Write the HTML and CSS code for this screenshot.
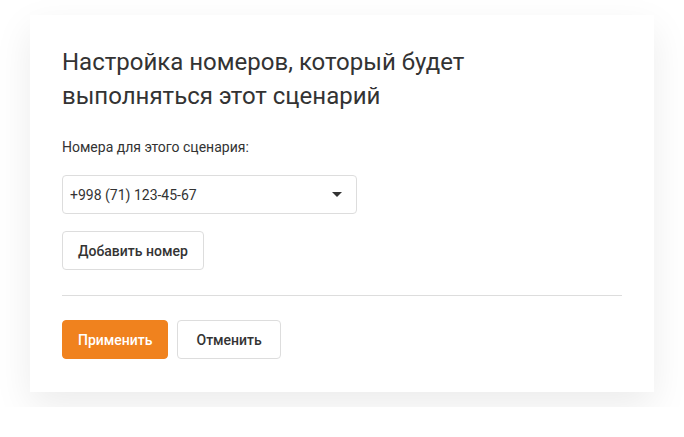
FILE: index.html
```html
<!DOCTYPE html>
<html lang="ru">
<head>
    <meta charset="UTF-8">
    <meta name="viewport" content="width=device-width, initial-scale=1.0">
    <title>Настройка номеров</title>
    <link rel="stylesheet" href="styles.css">
</head>
<body>
    <div class="card">
        <h2>Настройка номеров, который будет выполняться этот сценарий</h2>

        <label class="field-label">Номера для этого сценария:</label>

        <div class="select">
            <span>+998 (71) 123-45-67</span>
            <span class="caret"></span>
        </div>

        <button class="btn add-btn">Добавить номер</button>

        <hr class="divider">

        <div class="actions">
            <button class="btn apply-btn">Применить</button>
            <button class="btn cancel-btn">Отменить</button>
        </div>
    </div>
</body>
</html>
```

FILE: styles.css
```css
* {
    margin: 0;
    padding: 0;
    box-sizing: border-box;
}

body {
    font-family: Roboto, "Liberation Sans", sans-serif;
    background-color: #fff;
    color: #333;
    padding: 15px 30px;
}

.card {
    width: 624px;
    background: white;
    padding: 30px 32px 33px;
    box-shadow: 0 14px 36px rgba(0, 0, 0, 0.08);
}

h2 {
    font-size: 24px;
    line-height: 34px;
    font-weight: 400;
    color: #333;
    max-width: 460px;
}

.field-label {
    display: block;
    margin-top: 25px;
    font-size: 14px;
    line-height: 18px;
    color: #333;
}

.select {
    display: flex;
    align-items: center;
    justify-content: space-between;
    width: 295px;
    height: 39px;
    margin-top: 19px;
    padding: 0 14px 0 7px;
    border: 1px solid #ddd;
    border-radius: 4px;
    font-size: 14px;
}

.caret {
    width: 0;
    height: 0;
    border-left: 5px solid transparent;
    border-right: 5px solid transparent;
    border-top: 5px solid #333;
}

.btn {
    display: block;
    height: 39px;
    padding: 0 15px;
    border: 1px solid #ddd;
    border-radius: 4px;
    background: white;
    font-family: inherit;
    font-size: 14px;
    font-weight: 500;
    color: #333;
    cursor: pointer;
}

.add-btn {
    margin-top: 17px;
}

.divider {
    border: none;
    border-top: 1px solid #ddd;
    margin-top: 25px;
}

.actions {
    display: flex;
    gap: 9px;
    margin-top: 24px;
}

.apply-btn {
    background-color: #f0821e;
    border-color: #f0821e;
    color: white;
}

.cancel-btn {
    padding: 0 18px;
}
```
